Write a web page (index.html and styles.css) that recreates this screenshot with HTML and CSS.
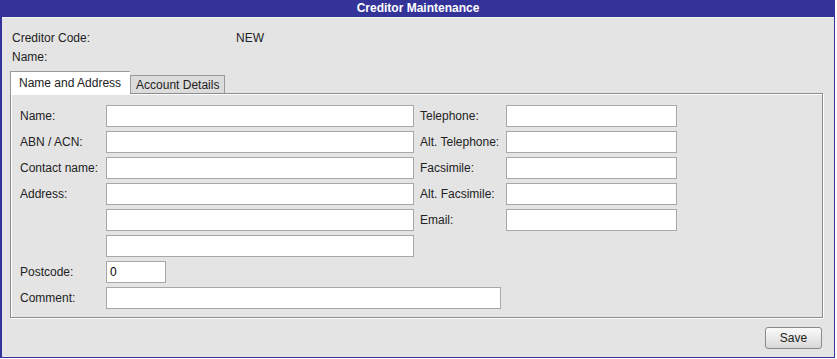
FILE: index.html
```html
<!DOCTYPE html>
<html lang="en">
<head>
  <meta charset="UTF-8" />
  <title>Creditor Maintenance</title>
  <link rel="stylesheet" href="styles.css">
</head>
<body>
  <div class="window">
    <div class="titlebar">Creditor Maintenance</div>
    <div class="content">
      <!-- Header info -->
      <div class="info">
        <span>Creditor Code:</span><span>NEW</span>
        <span>Name:</span><span></span>
      </div>
      <!-- Tabs -->
      <div class="tabs">
        <div class="tab active">Name and Address</div>
        <div class="tab">Account Details</div>
      </div>
      <div class="panel">
        <div class="form-grid">
          <label>Name:</label><input type="text" class="wide" />
          <label>Telephone:</label><input type="text" class="mid" />

          <label>ABN / ACN:</label><input type="text" class="wide" />
          <label>Alt. Telephone:</label><input type="text" class="mid" />

          <label>Contact name:</label><input type="text" class="wide" />
          <label>Facsimile:</label><input type="text" class="mid" />

          <label>Address:</label><input type="text" class="wide" />
          <label>Alt. Facsimile:</label><input type="text" class="mid" />

          <span></span><input type="text" class="wide" />
          <label>Email:</label><input type="text" class="mid" />

          <span></span><input type="text" class="wide" />
          <span></span><span></span>

          <label>Postcode:</label><input type="text" class="short" value="0" />
          <span></span><span></span>

          <label>Comment:</label><input type="text" class="comment" />
        </div>
      </div>
      <div class="actions">
        <button type="button" class="btn">Save</button>
      </div>
    </div>
  </div>
</body>
</html>
```
FILE: styles.css
```css
body {
  margin: 0;
  background: #fff;
  font-family: "Liberation Sans", Arial, sans-serif;
  font-size: 12px;
  color: #222;
}
.window {
  width: 835px;
  height: 358px;
  box-sizing: border-box;
  border: 1px solid #333399;
  border-left-width: 2px;
  border-top: 0;
  background: #e4e4e4;
}
.titlebar {
  height: 17px;
  line-height: 17px;
  background: #333399;
  color: #fff;
  font-weight: bold;
  text-align: center;
  border-bottom: 1px solid #f2f2f2;
}
.content {
  padding: 10px 11px 0 8px;
}
/* Header info */
.info {
  display: grid;
  grid-template-columns: 224px auto;
  grid-auto-rows: 19px;
  align-items: center;
  margin-left: 2px;
}
.tabs {
  display: flex;
  align-items: flex-end;
  margin-top: 5px;
  height: 22px;
}
.tab {
  height: 17px;
  line-height: 18px;
  padding: 0 5px;
  border: 1px solid #9a9a9a;
  border-bottom: 0;
  background: #dcdcdc;
}
.tab.active {
  height: 22px;
  line-height: 22px;
  padding: 0 9px 0 8px;
  background: #fff;
  margin-bottom: -1px;
  position: relative;
  border-right: 0;
}
.panel {
  height: 212px;
  border: 1px solid #8c8c8c;
  box-shadow: inset 1px 1px 0 #fff, 1px 1px 0 #fff;
  padding: 11px 9px 0 9px;
}
.form-grid {
  display: grid;
  grid-template-columns: 86px 308px 92px 171px;
  row-gap: 4px;
  grid-auto-rows: 22px;
  align-items: center;
}
.form-grid input {
  height: 22px;
  box-sizing: border-box;
  border: 1px solid #a8a8a8;
  background: #fff;
  font-family: inherit;
  font-size: 12px;
  padding: 0 3px;
  margin: 0;
}
.form-grid input.wide { width: 308px; }
.form-grid input.mid { width: 171px; }
.form-grid input.short { width: 60px; }
.form-grid input.comment { width: 395px; grid-column: 2 / 5; }
.form-grid label:nth-child(4n+3) {
  padding-left: 6px;
}
.actions {
  display: flex;
  justify-content: flex-end;
  margin-top: 9px;
  padding-right: 1px;
}
.btn {
  width: 57px;
  height: 22px;
  font-family: inherit;
  font-size: 12px;
  color: #222;
  border: 1px solid #8a8a8a;
  border-radius: 3px;
  background: linear-gradient(#fafafa, #e6e6e6 60%, #d8d8d8);
  padding: 0;
}
```
